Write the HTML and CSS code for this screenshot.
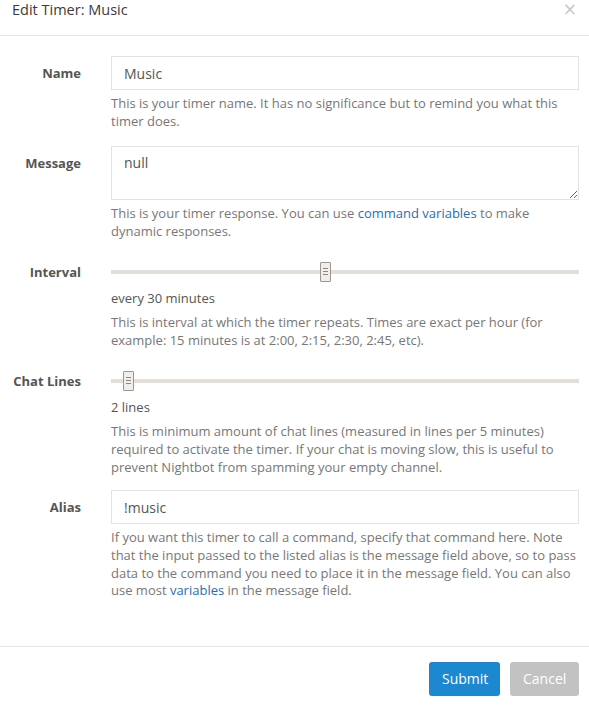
FILE: index.html
```html
<!DOCTYPE html>
<html>
<head>
<meta charset="utf-8">
<link rel="stylesheet" href="styles.css">
</head>
<body>
<div class="modal">
  <div class="modal-header">
    <h4 class="modal-title">Edit Timer: Music</h4>
    <span class="close">&times;</span>
  </div>
  <div class="modal-body">
    <div class="form-group first">
      <label class="label">Name</label>
      <div class="field">
        <input class="input" type="text" value="Music">
        <p class="help">This is your timer name. It has no significance but to remind you what this timer does.</p>
      </div>
    </div>
    <div class="form-group">
      <label class="label">Message</label>
      <div class="field">
        <textarea class="input textarea">null</textarea>
        <p class="help">This is your timer response. You can use <a href="#">command variables</a> to make dynamic responses.</p>
      </div>
    </div>
    <div class="form-group">
      <label class="label">Interval</label>
      <div class="field">
        <div class="slider"><div class="track"></div><div class="handle" style="left: 44.6%"><i></i><i></i><i></i></div></div>
        <div class="value">every 30 minutes</div>
        <p class="help">This is interval at which the timer repeats. Times are exact per hour (for example: 15 minutes is at 2:00, 2:15, 2:30, 2:45, etc).</p>
      </div>
    </div>
    <div class="form-group">
      <label class="label">Chat Lines</label>
      <div class="field">
        <div class="slider"><div class="track"></div><div class="handle" style="left: 2.6%"><i></i><i></i><i></i></div></div>
        <div class="value">2 lines</div>
        <p class="help">This is minimum amount of chat lines (measured in lines per 5 minutes) required to activate the timer. If your chat is moving slow, this is useful to prevent Nightbot from spamming your empty channel.</p>
      </div>
    </div>
    <div class="form-group">
      <label class="label">Alias</label>
      <div class="field">
        <input class="input" type="text" value="!music">
        <p class="help">If you want this timer to call a command, specify that command here. Note that the input passed to the listed alias is the message field above, so to pass data to the command you need to place it in the message field. You can also use most <a href="#">variables</a> in the message field.</p>
      </div>
    </div>
  </div>
  <div class="modal-footer">
    <button class="btn btn-primary">Submit</button>
    <button class="btn btn-default">Cancel</button>
  </div>
</div>
</body>
</html>
```
FILE: styles.css
```css
html, body {
  margin: 0;
  padding: 0;
  background: #fff;
}
body {
  font-family: "Open Sans", "Liberation Sans", sans-serif;
  font-size: 13px;
  color: #555;
  width: 589px;
  height: 705px;
  overflow: hidden;
}
.modal {
  width: 589px;
}
.modal-header {
  border-bottom: 1px solid #e5e5e5;
  display: flex;
  justify-content: space-between;
  align-items: flex-start;
  padding: 0 12px 0 12px;
  box-sizing: border-box;
  height: 36px;
}
.modal-title {
  margin: 0;
  font-size: 14.5px;
  font-weight: 400;
  line-height: 20px;
  color: #3a3a3a;
}
.close {
  color: #c8c8c8;
  font-size: 17px;
  line-height: 17px;
  padding-top: 1px;
  font-family: "DejaVu Sans", sans-serif;
}
.modal-body {
  padding: 20px 10px 32px 0;
}
.form-group {
  display: grid;
  grid-template-columns: 81px 1fr;
  column-gap: 30px;
  margin-bottom: 14px;
}
.form-group.first {
  margin-bottom: 16px;
}
.label {
  text-align: right;
  font-weight: 700;
  color: #555;
  padding-top: 8px;
  line-height: 18px;
}
.field {
  min-width: 0;
}
.input {
  display: block;
  width: 100%;
  box-sizing: border-box;
  height: 34px;
  border: 1px solid #e3e3e3;
  border-radius: 0;
  padding: 6px 12px;
  font-family: "Open Sans", "Liberation Sans", sans-serif;
  font-size: 14px;
  color: #555;
  margin: 0;
  outline: none;
}
.textarea {
  height: 54px;
  resize: vertical;
  line-height: 20px;
  padding-top: 6px;
}
.help {
  margin: 5px 0 0 0;
  color: #777;
  line-height: 17.68px;
}
.help a {
  color: #2a6eb0;
  text-decoration: none;
}
.slider {
  position: relative;
  height: 32px;
}
.track {
  position: absolute;
  left: 0;
  right: 0;
  top: 15px;
  height: 4px;
  background: #e2dfda;
}
.handle {
  position: absolute;
  top: 7px;
  width: 9px;
  height: 18px;
  background: #f0eeeb;
  border: 1px solid #9c9590;
  border-radius: 1px;
  display: flex;
  flex-direction: column;
  align-items: center;
  justify-content: center;
  gap: 2px;
}
.handle i {
  display: block;
  width: 5px;
  height: 1px;
  background: #8d8782;
}
.value {
  line-height: 18px;
  color: #555;
  margin-top: 2px;
}
.value + .help {
  margin-top: 7.5px;
}
.modal-footer {
  border-top: 1px solid #e5e5e5;
  padding: 15px 10px 15px 0;
  display: flex;
  justify-content: flex-end;
  gap: 10px;
}
.btn {
  height: 34px;
  border: none;
  border-radius: 3px;
  font-family: "Open Sans", "Liberation Sans", sans-serif;
  font-size: 14px;
  color: #fff;
  padding: 0 13px;
}
.btn-primary {
  background: #1b88cf;
  width: 71px;
}
.btn-default {
  background: #c2c2c2;
  width: 69px;
}
```
